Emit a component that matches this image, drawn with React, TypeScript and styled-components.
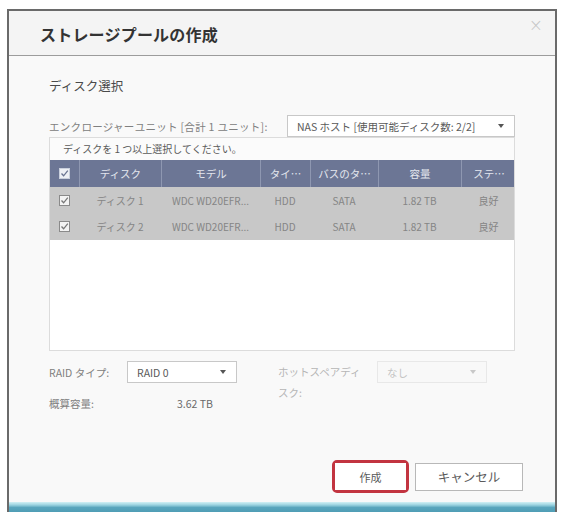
import styled, { createGlobalStyle } from "styled-components";

const GlobalStyle = createGlobalStyle`
  html, body {
    margin: 0;
    padding: 0;
    background: #ffffff;
  }
  body {
    font-family: "Noto Sans CJK JP", "Noto Sans", "Liberation Sans", sans-serif;
  }
`;

const columns = [
  { key: "check", width: 29 },
  { key: "disk", label: "ディスク", width: 82 },
  { key: "model", label: "モデル", width: 99 },
  { key: "type", label: "タイ…", width: 50 },
  { key: "bus", label: "バスのタ…", width: 68 },
  { key: "size", label: "容量", width: 83 },
  { key: "status", label: "ステ…", width: 55 },
];

const disks = [
  { disk: "ディスク 1", model: "WDC WD20EFR...", type: "HDD", bus: "SATA", size: "1.82 TB", status: "良好" },
  { disk: "ディスク 2", model: "WDC WD20EFR...", type: "HDD", bus: "SATA", size: "1.82 TB", status: "良好" },
];

function CheckIcon({ light }: { light?: boolean }) {
  return (
    <svg width="11" height="11" viewBox="0 0 11 11">
      <rect
        x="0.5"
        y="0.5"
        width="10"
        height="10"
        fill={light ? "#eef0f5" : "#f3f3f3"}
        stroke={light ? "#c9cfdc" : "#8a8a8a"}
      />
      <path
        d="M2.5 5.5 L4.6 7.8 L8.8 2.6"
        fill="none"
        stroke={light ? "#6a7492" : "#777"}
        strokeWidth="1.3"
      />
    </svg>
  );
}

function Caret({ faded }: { faded?: boolean }) {
  return (
    <svg width="6" height="4" viewBox="0 0 6 4">
      <path d="M0 0 L6 0 L3 4 Z" fill={faded ? "#c8c8c8" : "#555"} />
    </svg>
  );
}

export default function App() {
  return (
    <>
      <GlobalStyle />
      <Page>
        <Dialog>
          <Header>
            <Title>ストレージプールの作成</Title>
            <Close>×</Close>
          </Header>
          <Body>
            <SectionTitle>ディスク選択</SectionTitle>
            <EnclosureRow>
              <FieldLabel>
                エンクロージャーユニット [合計 1 ユニット]:
              </FieldLabel>
              <Select width={228}>
                <span>NAS ホスト [使用可能ディスク数: 2/2]</span>
                <Caret />
              </Select>
            </EnclosureRow>
            <DiskTable>
              <Notice>ディスクを 1 つ以上選択してください。</Notice>
              <HeadRow>
                {columns.map((c) => (
                  <HeadCell key={c.key} width={c.width}>
                    {c.key === "check" ? <CheckIcon light /> : c.label}
                  </HeadCell>
                ))}
              </HeadRow>
              {disks.map((d) => (
                <DataRow key={d.disk}>
                  <Cell width={29}>
                    <CheckIcon />
                  </Cell>
                  <Cell width={82}>{d.disk}</Cell>
                  <Cell width={99}>{d.model}</Cell>
                  <Cell width={50}>{d.type}</Cell>
                  <Cell width={68}>{d.bus}</Cell>
                  <Cell width={83}>{d.size}</Cell>
                  <Cell width={55}>{d.status}</Cell>
                </DataRow>
              ))}
            </DiskTable>
            <Options>
              <OptLabel>RAID タイプ:</OptLabel>
              <Select width={110}>
                <span>RAID 0</span>
                <Caret />
              </Select>
              <SpareLabel>ホットスペアディスク:</SpareLabel>
              <Select width={110} disabled>
                <span>なし</span>
                <Caret faded />
              </Select>
              <OptLabel>概算容量:</OptLabel>
              <Capacity>3.62 TB</Capacity>
            </Options>
          </Body>
          <ButtonBar>
            <Highlight>
              <Button>作成</Button>
            </Highlight>
            <Button wide>キャンセル</Button>
          </ButtonBar>
          <BottomBand />
        </Dialog>
      </Page>
    </>
  );
}

const Page = styled.div`
  width: 562px;
  height: 512px;
  overflow: hidden;
  padding: 9px 0 0 7px;
  box-sizing: border-box;
  background: #ffffff;
`;

const Dialog = styled.div`
  width: 550px;
  height: 503px;
  box-sizing: border-box;
  border: 2px solid #6a6a6a;
  border-bottom: none;
  background: #f9f9f9;
  display: flex;
  flex-direction: column;
`;

const Header = styled.div`
  height: 44px;
  flex-shrink: 0;
  display: flex;
  justify-content: space-between;
  align-items: flex-start;
  padding: 0 12px 0 31px;
  background: #f4f4f4;
  border-bottom: 1px solid #9c9c9c;
`;

const Title = styled.h1`
  margin: 11px 0 0;
  font-size: 16px;
  line-height: 24px;
  font-weight: 700;
  color: #333;
  letter-spacing: 0.2px;
`;

const Close = styled.span`
  margin-top: 4px;
  font-family: "DejaVu Sans", sans-serif;
  font-size: 17px;
  font-weight: 300;
  color: #c6c6c6;
`;

const Body = styled.div`
  flex: 1;
  display: flex;
  flex-direction: column;
  padding: 0 40px;
`;

const SectionTitle = styled.div`
  margin-top: 21px;
  font-size: 12.5px;
  line-height: 18px;
  color: #4a4a4a;
`;

const EnclosureRow = styled.div`
  margin-top: 20px;
  display: flex;
  align-items: center;
  justify-content: space-between;
  height: 22px;
`;

const FieldLabel = styled.span`
  font-size: 10.5px;
  color: #808080;
  white-space: nowrap;
  letter-spacing: 0.3px;
`;

const Select = styled.div<{ width: number; disabled?: boolean }>`
  width: ${(p) => p.width}px;
  height: 22px;
  box-sizing: border-box;
  display: flex;
  align-items: center;
  justify-content: space-between;
  padding: 0 10px 0 9px;
  background: ${(p) => (p.disabled ? "#f8f8f8" : "#ffffff")};
  border: 1px solid ${(p) => (p.disabled ? "#e8e8e8" : "#c8c8c8")};
  font-size: 10.5px;
  color: ${(p) => (p.disabled ? "#c4c4c4" : "#5a5a5a")};
  white-space: nowrap;
`;

const DiskTable = styled.div`
  height: 214px;
  box-sizing: border-box;
  border: 1px solid #dcdcdc;
  background: #ffffff;
  display: flex;
  flex-direction: column;
`;

const Notice = styled.div`
  height: 22px;
  line-height: 22px;
  padding-left: 13px;
  font-size: 10px;
  color: #5a5a5a;
  background: #fbfbfb;
`;

const HeadRow = styled.div`
  display: flex;
  height: 27px;
  background: #6c7695;
`;

const HeadCell = styled.div<{ width: number }>`
  width: ${(p) => p.width}px;
  flex-shrink: 0;
  display: flex;
  align-items: center;
  justify-content: center;
  font-size: 10.5px;
  color: #e3e6ee;
  box-sizing: border-box;
  border-left: 1px solid #8e97b1;
  &:first-child {
    border-left: none;
  }
`;

const DataRow = styled.div`
  display: flex;
  height: 26.5px;
  background: #c8c8c8;
`;

const Cell = styled.div<{ width: number }>`
  width: ${(p) => p.width}px;
  flex-shrink: 0;
  display: flex;
  align-items: center;
  justify-content: center;
  font-size: 10px;
  color: #858585;
  white-space: nowrap;
`;

const Options = styled.div`
  margin-top: 10px;
  display: grid;
  grid-template-columns: 78px 151px 99px 110px;
  grid-template-rows: 22px 22px;
  row-gap: 9px;
  align-items: center;
`;

const OptLabel = styled.span`
  font-size: 10.5px;
  color: #808080;
`;

const SpareLabel = styled.span`
  grid-row: 1 / span 2;
  grid-column: 3;
  align-self: start;
  width: 86px;
  font-size: 10.5px;
  line-height: 21px;
  color: #b6b6b6;
`;

const Capacity = styled.span`
  padding-left: 50px;
  font-size: 10.5px;
  color: #6a6a6a;
`;

const ButtonBar = styled.div`
  flex-shrink: 0;
  display: flex;
  justify-content: flex-end;
  align-items: center;
  gap: 6px;
  padding: 0 32px 9px 0;
`;

const Highlight = styled.div`
  border: 3px solid #c23440;
  border-radius: 5px;
  display: flex;
`;

const Button = styled.button<{ wide?: boolean }>`
  width: ${(p) => (p.wide ? 108 : 71)}px;
  height: ${(p) => (p.wide ? 28 : 27)}px;
  box-sizing: border-box;
  border: 1px solid ${(p) => (p.wide ? "#b8b8b8" : "#ffffff")};
  background: #ffffff;
  font-family: "Noto Sans CJK JP", sans-serif;
  font-size: ${(p) => (p.wide ? 12.5 : 11)}px;
  color: #5a5a5a;
  padding: 0;
`;

const BottomBand = styled.div`
  height: 10px;
  flex-shrink: 0;
  background: linear-gradient(#d3f1f5 0%, #9bd3e0 30%, #5aa6bd 55%, #4f9db5 100%);
`;
